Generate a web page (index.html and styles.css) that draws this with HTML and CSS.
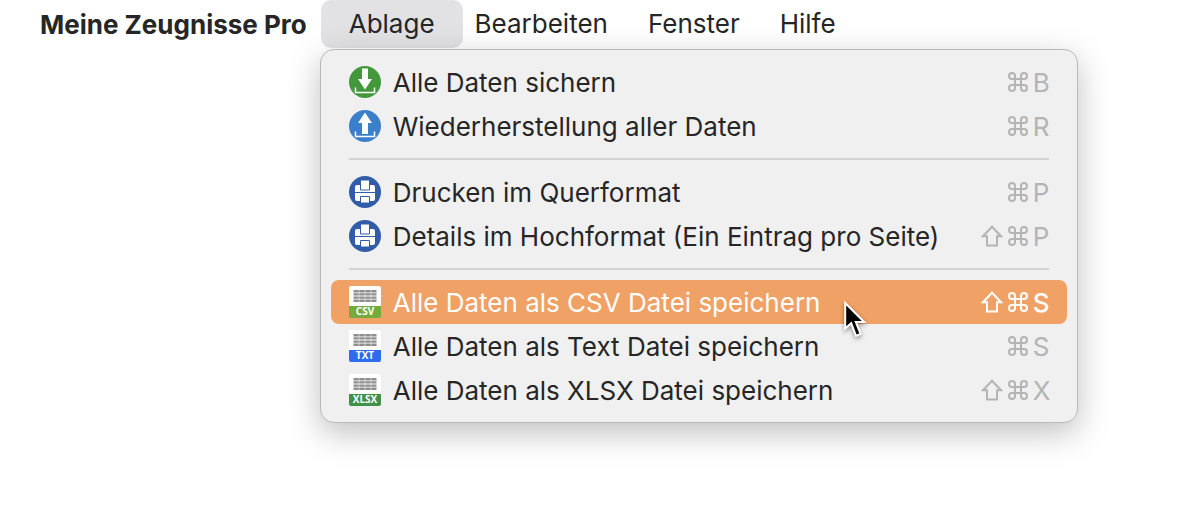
FILE: index.html
```html
<!DOCTYPE html>
<html lang="de">
<head>
    <meta charset="UTF-8">
    <meta name="viewport" content="width=device-width, initial-scale=1.0">
    <title>Meine Zeugnisse Pro</title>
    <link rel="stylesheet" href="styles.css">
</head>
<body>
    <!-- shared symbols -->
    <svg class="symbols" aria-hidden="true">
        <symbol id="cmd" viewBox="0 0 20 20">
            <path d="M7 7V4a3 3 0 1 0-3 3h12a3 3 0 1 0-3-3v12a3 3 0 1 0 3-3H4a3 3 0 1 0 3 3z" fill="none" stroke="currentColor" stroke-width="2"/>
        </symbol>
        <symbol id="shift" viewBox="0 0 22 22">
            <path d="M11 1.800L20 11.200h-4V20.500H6v-9.300H2z" fill="none" stroke="currentColor" stroke-width="2"/>
        </symbol>
        <symbol id="printer" viewBox="0 0 32 32">
            <circle cx="16" cy="16" r="16" fill="#315ca8"/>
            <path d="M8 9h16a2 2 0 0 1 2 2v12a2 2 0 0 1-2 2H8a2 2 0 0 1-2-2V11a2 2 0 0 1 2-2z" fill="#fff"/>
            <path d="M6 16.500h20" stroke="#315ca8" stroke-width="1"/>
            <path d="M11.500 4h9v10h-9zM11.500 20.500h9v6.500h-9z" fill="#fff" stroke="#315ca8" stroke-width="1"/>
        </symbol>
        <symbol id="sheet" viewBox="0 0 32 32">
            <path d="M2 0h28a2 2 0 0 1 2 2v19H0V2a2 2 0 0 1 2-2z" fill="#fff"/>
            <path d="M4.500 5.200h23M4.500 8.400h23M4.500 11.600h23M4.500 14.800h23" stroke="#8e8e8e" stroke-width="2.400"/>
            <path d="M10 3v14M16 3v14M22 3v14" stroke="#fff" stroke-width="0.500"/>
            <path d="M0 20h32v10a2 2 0 0 1-2 2H2a2 2 0 0 1-2-2z" fill="currentColor"/>
        </symbol>
    </svg>

    <nav class="menubar">
        <span class="appname">Meine Zeugnisse Pro</span>
        <div class="menu">
            <button type="button" class="menu-title open" aria-expanded="true">Ablage</button>
            <div class="dropdown">
                <button type="button" class="item">
                    <svg class="icon" viewBox="0 0 32 32">
                        <circle cx="16" cy="16" r="16" fill="#43983c"/>
                        <path d="M13 2.500h6V13h4l-7 10.500L9 13h4z" fill="#fff"/>
                        <path d="M6.500 21.500v5h19v-5" fill="none" stroke="#fff" stroke-width="1.500"/>
                    </svg>
                    <span class="label">Alle Daten sichern</span>
                    <kbd class="keys"><svg class="cmd"><use href="#cmd"/></svg><span class="key">B</span></kbd>
                </button>
                <button type="button" class="item">
                    <svg class="icon" viewBox="0 0 32 32">
                        <circle cx="16" cy="16" r="16" fill="#3b7fca"/>
                        <path d="M16 2.500L23 13h-4v11h-6V13H9z" fill="#fff"/>
                        <path d="M6.500 21.500v5h19v-5" fill="none" stroke="#fff" stroke-width="1.500"/>
                    </svg>
                    <span class="label">Wiederherstellung aller Daten</span>
                    <kbd class="keys"><svg class="cmd"><use href="#cmd"/></svg><span class="key">R</span></kbd>
                </button>
                <hr class="separator">
                <button type="button" class="item">
                    <svg class="icon"><use href="#printer"/></svg>
                    <span class="label">Drucken im Querformat</span>
                    <kbd class="keys"><svg class="cmd"><use href="#cmd"/></svg><span class="key">P</span></kbd>
                </button>
                <button type="button" class="item">
                    <svg class="icon"><use href="#printer"/></svg>
                    <span class="label">Details im Hochformat (Ein Eintrag pro Seite)</span>
                    <kbd class="keys"><svg class="shift"><use href="#shift"/></svg><svg class="cmd"><use href="#cmd"/></svg><span class="key">P</span></kbd>
                </button>
                <hr class="separator">
                <button type="button" class="item selected">
                    <svg class="icon csv" viewBox="0 0 32 32">
                        <use href="#sheet"/>
                        <text x="16" y="29" class="filetype">CSV</text>
                    </svg>
                    <span class="label">Alle Daten als CSV Datei speichern</span>
                    <kbd class="keys"><svg class="shift"><use href="#shift"/></svg><svg class="cmd"><use href="#cmd"/></svg><span class="key">S</span></kbd>
                    <svg class="pointer" viewBox="0 0 24 38">
                        <path d="M1.200 3v25.500l6-5.200 4.800 12.500 4.600-2L11.800 22h8.400z" fill="#000" stroke="#fff" stroke-width="2"/>
                    </svg>
                </button>
                <button type="button" class="item">
                    <svg class="icon txt" viewBox="0 0 32 32">
                        <use href="#sheet"/>
                        <text x="16" y="29" class="filetype">TXT</text>
                    </svg>
                    <span class="label">Alle Daten als Text Datei speichern</span>
                    <kbd class="keys"><svg class="cmd"><use href="#cmd"/></svg><span class="key">S</span></kbd>
                </button>
                <button type="button" class="item">
                    <svg class="icon xlsx" viewBox="0 0 32 32">
                        <use href="#sheet"/>
                        <text x="16" y="29" class="filetype">XLSX</text>
                    </svg>
                    <span class="label">Alle Daten als XLSX Datei speichern</span>
                    <kbd class="keys"><svg class="shift"><use href="#shift"/></svg><svg class="cmd"><use href="#cmd"/></svg><span class="key">X</span></kbd>
                </button>
            </div>
        </div>
        <button type="button" class="menu-title">Bearbeiten</button>
        <button type="button" class="menu-title">Fenster</button>
        <button type="button" class="menu-title">Hilfe</button>
    </nav>
</body>
</html>
```

FILE: styles.css
```css
* {
    box-sizing: border-box;
}
body {
    min-height: 100vh;
    margin: 0;
    background: #fff;
    color: #262626;
    font-family: Inter, "Liberation Sans", sans-serif;
    font-size: 26px;
}
button {
    margin: 0;
    border: none;
    background: none;
    color: inherit;
    font: inherit;
}
.symbols {
    position: absolute;
    width: 0;
    height: 0;
}
.menubar {
    display: flex;
    align-items: center;
    height: 48px;
    padding-left: 40px;
    white-space: nowrap;
}
.appname {
    margin-right: 14px;
    font-weight: 700;
}
.menu {
    position: relative;
    margin-right: -8px;
}
.menu-title {
    height: 48px;
    padding: 0 20px 2px;
}
.menu-title.open {
    padding: 0 28px 2px;
    border-radius: 10px;
    background: #e2e2e4;
}
.dropdown {
    position: absolute;
    top: 100%;
    left: -1px;
    width: 758px;
    margin-top: 1px;
    padding: 10px;
    border: 1px solid #b9b9b9;
    border-radius: 14px;
    background: #f0f0f0;
    box-shadow: 0 10px 32px rgba(0, 0, 0, 0.25);
}
.item {
    position: relative;
    display: flex;
    align-items: center;
    width: 100%;
    height: 44px;
    padding: 0 18px;
    border-radius: 8px;
    text-align: left;
}
.item.selected {
    background: #f0a165;
    color: #fff;
}
.icon {
    flex: none;
    width: 32px;
    height: 32px;
    margin-right: 12px;
}
.csv {
    color: #75ab3d;
}
.txt {
    color: #2f6bed;
}
.xlsx {
    color: #40914a;
}
.filetype {
    fill: #fff;
    font-family: "Open Sans", sans-serif;
    font-size: 10px;
    font-weight: 700;
    text-anchor: middle;
}
.label {
    flex: 1;
}
.keys {
    display: flex;
    align-items: center;
    gap: 5px;
    color: #b4b4b4;
    font-family: inherit;
}
.selected .keys {
    color: #fff;
    font-weight: 500;
}
.selected .keys svg {
    stroke-width: 2;
}
.shift {
    width: 22px;
    height: 22px;
}
.cmd {
    width: 20px;
    height: 20px;
}
.key {
    width: 16px;
}
.separator {
    height: 2px;
    margin: 10px 18px;
    border: none;
    background: #d3d3d3;
}
.pointer {
    position: absolute;
    top: 20px;
    left: 513px;
    width: 24px;
    height: 38px;
    z-index: 1;
    filter: drop-shadow(0 2px 2px rgba(0, 0, 0, 0.4));
}
```
